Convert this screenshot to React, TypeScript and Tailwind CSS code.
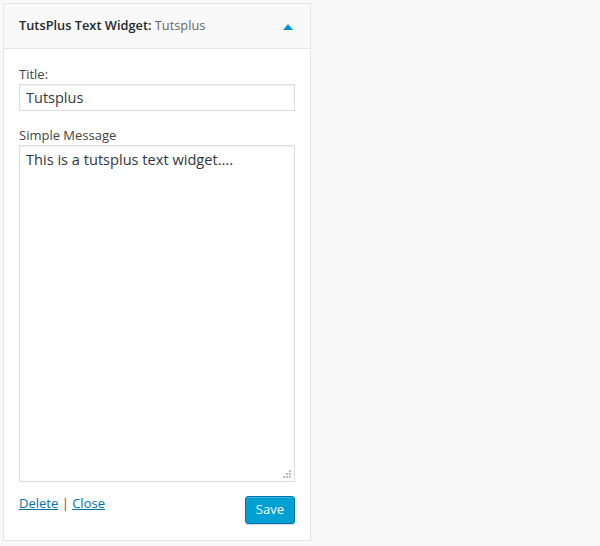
export default function App() {
  return (
    <div
      className="min-h-[546px] w-[600px] bg-[#f9f9f9] pl-[3px] pt-[3px]"
      style={{ fontFamily: '"Open Sans", "Noto Sans", sans-serif' }}
    >
      <div className="w-[308px] border border-[#e5e5e5] bg-white">
        <div className="flex h-[45px] items-center justify-between border-b border-[#e5e5e5] bg-[#f9f9f9] pl-[15px] pr-[17px]">
          <h3 className="text-[12.8px] font-semibold text-[#23282d]">
            TutsPlus Text Widget: <span className="font-normal text-[#666]">Tutsplus</span>
          </h3>
          <svg width="10" height="6" viewBox="0 0 10 6" className="mt-[1px]">
            <path d="M5 0 L10 6 L0 6 Z" fill="#0096d2" />
          </svg>
        </div>
        <div className="px-[15px] pb-[16px] pt-[16px]">
          <label className="block text-[13px] leading-[18px] text-[#444]">Title:</label>
          <input
            type="text"
            defaultValue="Tutsplus"
            className="mt-[1px] block h-[27px] w-full border border-[#ddd] px-[6px] text-[14.5px] text-[#32373c] shadow-[inset_0_1px_2px_rgba(0,0,0,0.07)] outline-none"
          />
          <label className="mt-[15px] block text-[13px] leading-[18px] text-[#444]">Simple Message</label>
          <div className="relative mt-[1px]">
            <textarea
              defaultValue="This is a tutsplus text widget...."
              className="block h-[337px] w-full resize-none border border-[#ddd] px-[6px] py-[2px] text-[14.6px] leading-[22px] text-[#32373c] shadow-[inset_0_1px_2px_rgba(0,0,0,0.07)] outline-none"
            />
            <svg width="10" height="10" viewBox="0 0 10 10" className="absolute bottom-[3px] right-[3px]">
              <g fill="#bbb">
                <rect x="7" y="1" width="2" height="2" />
                <rect x="4" y="4" width="2" height="2" />
                <rect x="7" y="4" width="2" height="2" />
                <rect x="1" y="7" width="2" height="2" />
                <rect x="4" y="7" width="2" height="2" />
                <rect x="7" y="7" width="2" height="2" />
              </g>
            </svg>
          </div>
          <div className="mt-[13px] flex items-start justify-between">
            <div className="-mt-[1px] text-[13px] text-[#555]">
              <a href="#" className="text-[#0073aa] underline">Delete</a>
              <span> | </span>
              <a href="#" className="text-[#0073aa] underline">Close</a>
            </div>
            <button className="mt-[1px] h-[28px] rounded-[3px] border border-[#0073aa] bg-[#00a0d2] px-[10px] text-[13px] text-white shadow-[inset_0_1px_0_rgba(120,200,230,0.5),0_1px_0_rgba(0,0,0,0.15)]">
              Save
            </button>
          </div>
        </div>
      </div>
    </div>
  );
}
